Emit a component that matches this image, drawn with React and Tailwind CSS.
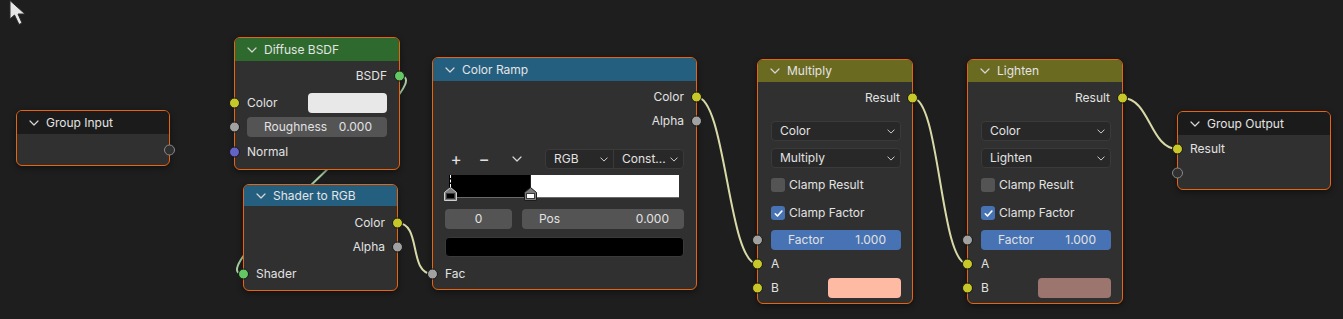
import React from 'react'

const SOCKET = {
  yellow: 'bg-[#c7c729] border border-[#161616]',
  gray: 'bg-[#a1a1a1] border border-[#161616]',
  green: 'bg-[#63c763] border border-[#161616]',
  blue: 'bg-[#6363c7] border border-[#161616]',
  hollow: 'bg-[#303030] border-[1.5px] border-[#8a8a8a]',
}

function Socket({ kind, side }) {
  const pos = side === 'in' ? 'left-[-6px]' : 'right-[-6px]'
  return (
    <span
      className={`absolute top-1/2 h-[11px] w-[11px] -translate-y-1/2 rounded-full ${SOCKET[kind]} ${pos}`}
    />
  )
}

function Chevron({ className = 'h-[6px] w-[10px]' }) {
  return (
    <svg
      viewBox="0 0 10 6"
      className={`shrink-0 ${className}`}
      fill="none"
      stroke="#d6d6d6"
      strokeWidth="1.2"
      strokeLinecap="round"
      strokeLinejoin="round"
    >
      <path d="M1 1l4 4 4-4" />
    </svg>
  )
}

function Node({ pos, head, title, children }) {
  return (
    <div
      className={`absolute flex flex-col rounded-[6px] border border-[#e8640f] bg-[#303030] shadow-[0_2px_6px_rgba(0,0,0,0.45)] ${pos}`}
    >
      <div
        className={`flex shrink-0 items-center gap-[7px] rounded-t-[5px] pl-[12px] text-[#e4e4e4] ${head}`}
      >
        <Chevron />
        <span>{title}</span>
      </div>
      {children}
    </div>
  )
}

function Row({ className = '', pad = 'px-[12px]', inS, outS, children }) {
  return (
    <div className={`relative flex shrink-0 items-center ${pad} ${className}`}>
      {inS && <Socket kind={inS} side="in" />}
      {children}
      {outS && <Socket kind={outS} side="out" />}
    </div>
  )
}

function Slider({ label, value, blue }) {
  return (
    <div
      className={`flex h-full flex-1 items-center justify-between rounded-[4px] pl-[17px] pr-[15px] ${
        blue ? 'bg-[#4772b3]' : 'bg-[#545454]'
      }`}
    >
      <span>{label}</span>
      <span>{value}</span>
    </div>
  )
}

function Dropdown({ label }) {
  return (
    <div className="flex h-full flex-1 items-center justify-between rounded-[4px] border border-[#3a3a3a] bg-[#282828] pl-[8px] pr-[5px]">
      <span>{label}</span>
      <Chevron className="h-[5px] w-[8px]" />
    </div>
  )
}

function Check({ on }) {
  if (!on) return <span className="h-[14px] w-[14px] shrink-0 rounded-[3px] bg-[#545454]" />
  return (
    <span className="flex h-[14px] w-[14px] shrink-0 items-center justify-center rounded-[3px] bg-[#4772b3]">
      <svg viewBox="0 0 12 12" className="h-[11px] w-[11px]" fill="none" stroke="#fff" strokeWidth="1.8" strokeLinecap="round" strokeLinejoin="round">
        <path d="M2.5 6.3l2.4 2.4 4.8-5.4" />
      </svg>
    </span>
  )
}

function Stop({ fill, edge, className }) {
  return (
    <svg viewBox="0 0 13 14" className={`absolute h-[14px] w-[13px] ${className}`}>
      <path d="M0.5 5.5L6.5 0.5L12.5 5.5V13.5H0.5Z" fill="#7c7c7c" stroke={edge} />
      <rect x="2.5" y="6.5" width="8" height="5" fill={fill} stroke="#3a3a3a" />
    </svg>
  )
}

function MixNode({ pos, title, swatch }) {
  const pad = 'pl-[13px] pr-[11px]'
  return (
    <Node pos={pos} head="h-[22px] bg-[#6a6a20]" title={title}>
      <Row className="mt-[5px] h-[22px] justify-end" outS="yellow">
        <span>Result</span>
      </Row>
      <Row className="mt-[12px] h-[20px]" pad={pad}>
        <Dropdown label="Color" />
      </Row>
      <Row className="mt-[7px] h-[20px]" pad={pad}>
        <Dropdown label={title} />
      </Row>
      <Row className="mt-[7px] h-[20px] gap-[4px]" pad={pad}>
        <Check />
        <span>Clamp Result</span>
      </Row>
      <Row className="mt-[8px] h-[20px] gap-[4px]" pad={pad}>
        <Check on />
        <span>Clamp Factor</span>
      </Row>
      <Row className="mt-[7px] h-[20px]" pad={pad} inS="gray">
        <Slider label="Factor" value="1.000" blue />
      </Row>
      <Row className="mt-[3px] h-[22px]" pad={pad} inS="yellow">
        <span>A</span>
      </Row>
      <Row className="mt-[3px] h-[20px] justify-between" pad={pad} inS="yellow">
        <span>B</span>
        <span className={`h-full w-[73px] rounded-[4px] ${swatch}`} />
      </Row>
    </Node>
  )
}

function Links() {
  const wire = '#d9d9a8'
  return (
    <svg className="absolute inset-0 h-full w-full" viewBox="0 0 1343 319" fill="none" strokeWidth="2">
      <path d="M399.5 76C449.5 76 193.5 274 243.5 274" stroke="#a9cfa3" />
      <path d="M397.5 223C422 223 408 274 432.5 274" stroke={wire} />
      <path d="M696.5 97C726 97 728 264 757.5 264" stroke={wire} />
      <path d="M912.5 98C940 98 940 264 967.5 264" stroke={wire} />
      <path d="M1122.5 98C1150 98 1150 149 1177.5 149" stroke={wire} />
    </svg>
  )
}

export default function App() {
  return (
    <div className="relative h-[319px] w-[1343px] overflow-hidden bg-[#1e1e1e] font-['Inter',sans-serif] text-[12px] text-[#e2e2e2]">
      <Links />

      {/* mouse pointer */}
      <svg viewBox="0 0 30 30" className="absolute left-0 top-0 h-[30px] w-[30px]">
        <path d="M10 0.5V19L14.5 15L19 24.5L22 23L18 14H25Z" fill="#e6e6e6" stroke="#2a2a2a" strokeWidth="1" />
      </svg>

      <Node pos="left-[16px] top-[110px] h-[56px] w-[154px]" head="h-[23px] bg-[#1b1b1b]" title="Group Input">
        <Row className="flex-1" outS="hollow" />
      </Node>

      <Node pos="left-[234px] top-[37px] h-[133px] w-[166px]" head="h-[23px] bg-[#2e6a2d]" title="Diffuse BSDF">
        <Row className="mt-[4px] h-[22px] justify-end" outS="green">
          <span>BSDF</span>
        </Row>
        <Row className="mt-[6px] h-[20px] justify-between" inS="yellow">
          <span>Color</span>
          <span className="h-full w-[79px] rounded-[4px] bg-[#e8e8e8]" />
        </Row>
        <Row className="mt-[4px] h-[20px]" inS="gray">
          <Slider label="Roughness" value="0.000" />
        </Row>
        <Row className="mt-[4px] h-[22px]" inS="blue">
          <span>Normal</span>
        </Row>
      </Node>

      <Node pos="left-[243px] top-[184px] h-[107px] w-[155px]" head="h-[21px] bg-[#245f80]" title="Shader to RGB">
        <Row className="mt-[6px] h-[22px] justify-end" outS="yellow">
          <span>Color</span>
        </Row>
        <Row className="mt-[2px] h-[22px] justify-end" outS="gray">
          <span>Alpha</span>
        </Row>
        <Row className="mt-[5px] h-[22px]" inS="green">
          <span>Shader</span>
        </Row>
      </Node>

      <Node pos="left-[432px] top-[57px] h-[233px] w-[265px]" head="h-[23px] bg-[#245f80]" title="Color Ramp">
        <Row className="mt-[5px] h-[22px] justify-end" outS="yellow">
          <span>Color</span>
        </Row>
        <Row className="mt-[2px] h-[22px] justify-end" outS="gray">
          <span>Alpha</span>
        </Row>
        <Row className="mt-[17px] h-[20px]">
          <span className="w-[22px] text-center text-[17px] leading-none">+</span>
          <span className="w-[34px] text-center text-[17px] leading-none">−</span>
          <span className="flex w-[32px] justify-center">
            <Chevron />
          </span>
          <div className="ml-auto flex h-full w-[139px] rounded-[4px] border border-[#3a3a3a] bg-[#282828]">
            <div className="flex w-[68px] items-center justify-between border-r border-[#3a3a3a] pl-[8px] pr-[5px]">
              <span>RGB</span>
              <Chevron className="h-[5px] w-[8px]" />
            </div>
            <div className="flex flex-1 items-center justify-between pl-[8px] pr-[5px]">
              <span>Const...</span>
              <Chevron className="h-[5px] w-[8px]" />
            </div>
          </div>
        </Row>
        <div className="relative ml-[16px] mr-[17px] mt-[6px] h-[26px] shrink-0">
          <div className="flex h-[23px] border-b border-[#6a6a6a]">
            <div className="w-[81px] bg-black" />
            <div className="flex-1 border-l border-[#222] bg-white" />
          </div>
          <span className="absolute left-[1px] top-0 h-[12px] border-l border-dashed border-white" />
          <Stop fill="#000" edge="#d0d0d0" className="left-[-5px] top-[12px]" />
          <Stop fill="#fff" edge="#1c1c1c" className="left-[75px] top-[12px]" />
        </div>
        <Row className="mt-[8px] h-[20px] gap-[10px]">
          <div className="flex h-full w-[67px] items-center justify-center rounded-[4px] bg-[#545454]">0</div>
          <Slider label="Pos" value="0.000" />
        </Row>
        <Row className="mt-[8px] h-[20px]">
          <div className="h-full flex-1 rounded-[4px] border border-[#3a3a3a] bg-black" />
        </Row>
        <Row className="mt-[6px] h-[22px]" inS="gray">
          <span>Fac</span>
        </Row>
      </Node>

      <MixNode pos="left-[757px] top-[59px] h-[245px] w-[156px]" title="Multiply" swatch="bg-[#ffbaa3]" />
      <MixNode pos="left-[967px] top-[59px] h-[245px] w-[156px]" title="Lighten" swatch="bg-[#9c766e]" />

      <Node pos="left-[1177px] top-[111px] h-[79px] w-[154px]" head="h-[23px] bg-[#1b1b1b]" title="Group Output">
        <Row className="mt-[3px] h-[22px]" inS="yellow">
          <span>Result</span>
        </Row>
        <Row className="mt-[2px] h-[22px]" inS="hollow" />
      </Node>
    </div>
  )
}
